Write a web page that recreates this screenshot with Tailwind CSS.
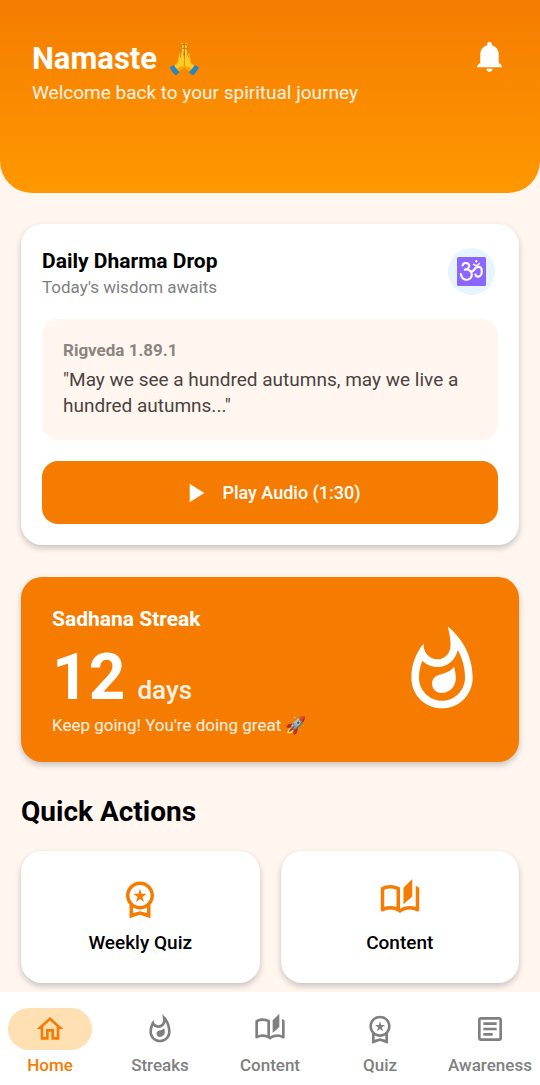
<!DOCTYPE html>
<html lang="en">
<head>
<meta charset="utf-8">
<meta name="viewport" content="width=device-width, initial-scale=1">
<title>Namaste</title>
<script src="https://cdn.jsdelivr.net/npm/@tailwindcss/browser@4"></script>
</head>
<body class="flex min-h-screen flex-col bg-[#fff6f0] font-['Roboto',sans-serif] text-black">
<svg class="hidden" aria-hidden="true">
  <symbol id="flame" viewBox="0 0 24 24"><path d="M11.57 13.16c-1.36.28-2.17 1.16-2.17 2.41 0 1.34 1.11 2.42 2.49 2.42 2.05 0 3.71-1.66 3.71-3.71 0-1.07-.15-2.12-.46-3.12-.79 1.07-2.2 1.72-3.57 2zM13.5.67s.74 2.65.74 4.8c0 2.06-1.35 3.73-3.41 3.73-2.07 0-3.63-1.67-3.63-3.73l.03-.36C5.21 7.51 4 10.62 4 14c0 4.42 3.58 8 8 8s8-3.58 8-8C20 8.61 17.41 3.8 13.5.67zM12 20c-3.31 0-6-2.69-6-6 0-1.53.3-3.04.86-4.43 1.01 1.01 2.41 1.63 3.97 1.63 2.66 0 4.75-1.83 5.28-4.43C17.34 8.97 18 11.44 18 14c0 3.31-2.69 6-6 6z"/></symbol>
  <symbol id="badge" viewBox="0 0 24 24"><path d="M9.68 13.69L12 11.93l2.31 1.76-.88-2.85L15.75 9h-2.84L12 6.19 11.09 9H8.25l2.31 1.84-.88 2.85zM20 10c0-4.42-3.58-8-8-8s-8 3.58-8 8c0 2.03.76 3.87 2 5.28V23l6-2 6 2v-7.72c1.24-1.41 2-3.25 2-5.28zm-8-6c3.31 0 6 2.69 6 6s-2.69 6-6 6-6-2.69-6-6 2.69-6 6-6zm0 15l-4 1.02v-3.1c1.18.68 2.54 1.08 4 1.08s2.82-.4 4-1.08v3.1L12 19z"/></symbol>
  <symbol id="book" viewBox="0 0 24 24"><path d="M22.47 5.2c-.47-.24-.96-.44-1.47-.61v12.03c-1.14-.41-2.31-.62-3.5-.62-1.9 0-3.78.54-5.5 1.58V5.48C10.38 4.55 8.51 4 6.5 4c-1.79 0-3.48.44-4.97 1.2-.33.16-.53.51-.53.88v12.08c0 .58.47.99 1 .99.16 0 .32-.04.48-.12C3.69 18.4 5.05 18 6.5 18c2.07 0 3.98.82 5.5 2 1.52-1.18 3.43-2 5.5-2 1.45 0 2.81.4 4.02 1.04.16.08.32.12.48.12.52 0 1-.41 1-.99V6.08c0-.37-.2-.72-.53-.88zM10 16.62C8.86 16.21 7.69 16 6.5 16c-1.19 0-2.36.21-3.5.62V6.71C4.11 6.24 5.28 6 6.5 6c1.2 0 2.39.25 3.5.72v9.9zM19 .5l-5 5V15l5-4.5V.5z"/></symbol>
</svg>

<header class="flex h-[193px] items-start justify-between rounded-b-[32px] bg-linear-to-b from-[#f57c00] to-[#ff9800] px-8 pt-[38px] text-white">
  <div>
    <h1 class="text-[31px] leading-[42px] font-bold">Namaste <span>🙏</span></h1>
    <p class="text-[19px] leading-[26px] text-white/90">Welcome back to your spiritual journey</p>
  </div>
  <button type="button" aria-label="Notifications">
    <svg class="size-[37px]" viewBox="0 0 24 24" fill="currentColor"><path d="M12 22c1.1 0 2-.9 2-2h-4c0 1.1.89 2 2 2zm6-6v-5c0-3.07-1.64-5.64-4.5-6.32V4c0-.83-.67-1.5-1.5-1.5s-1.5.67-1.5 1.5v.68C7.63 5.36 6 7.92 6 11v5l-2 2v1h16v-1l-2-2z"/></svg>
  </button>
</header>

<main class="flex grow flex-col px-[21px] pt-[31px] pb-[9px]">
  <section class="rounded-[21px] bg-white p-[21px] shadow-[0_3px_6px_rgba(0,0,0,0.22)]">
    <div class="flex items-center justify-between">
      <div>
        <h2 class="text-[21px] leading-8 font-bold">Daily Dharma Drop</h2>
        <p class="text-[17px] leading-5 text-[#808080]">Today's wisdom awaits</p>
      </div>
      <div class="mr-[3px] flex size-[47px] items-center justify-center rounded-full bg-[#e6f5ff]">
        <svg class="size-[29px]" viewBox="0 0 29 29" fill="none" stroke="#fff" stroke-width="2.1" stroke-linecap="round" stroke-linejoin="round" role="img" aria-label="Om">
          <rect width="29" height="29" rx="1.5" fill="#8c66ff" stroke="none"/>
          <path d="M5.6 8.4C6.1 6.4 8 5.7 9.9 6.1c2.1.5 2.8 2.6 1.7 4.4-.8 1.3-2.2 2-3.8 2.1 3.6-.5 6.8 1 7 4.4.2 3.300-2 5.800-5 5.800-3.200 0-5.400-2.300-5.900-5.700"/>
          <path d="M13.300 14.300c1.700.6 3-.3 3.900-1.700 1-1.600 2.300-2.700 4-2.700 2.300 0 3.600 1.900 3.600 4.400 0 2.900-1.500 5.300-3.800 5.300-1.400 0-2.300-.8-2.600-2.100"/>
          <path d="M16.600 7.300c1.500 1.600 4.200 1.500 5.700-.7" stroke-width="1.500"/>
          <path d="M19.300 2.800l1.500 1.500-1.500 1.500-1.500-1.500z" fill="#fff" stroke="none"/>
        </svg>
      </div>
    </div>
    <blockquote class="mt-[22px] rounded-2xl bg-[#fff6f0] p-[21px]">
      <p class="text-[17px] leading-[21px] font-bold text-[#8b8480]">Rigveda 1.89.1</p>
      <p class="mt-[6px] text-[19px] leading-[26px] text-[#4a4340]">"May we see a hundred autumns, may we live a hundred autumns..."</p>
    </blockquote>
    <button type="button" class="mt-[21px] flex h-[63px] w-full items-center justify-center gap-[11px] rounded-2xl bg-[#f57c00] text-[18px] font-medium text-white">
      <svg class="size-8" viewBox="0 0 24 24" fill="currentColor"><path d="M8 5v14l11-7z"/></svg>
      Play Audio (1:30)
    </button>
  </section>

  <section class="mt-8 flex items-center justify-between rounded-[21px] bg-[#f57c00] px-[31px] py-[26px] text-white shadow-[0_3px_6px_rgba(0,0,0,0.22)]">
    <div>
      <h2 class="text-[21px] leading-8 font-bold">Sadhana Streak</h2>
      <p class="mt-[5px] flex items-baseline gap-3"><span class="text-[64px] leading-[75px] font-bold">12</span><span class="text-[26px] leading-8 font-medium text-white/90">days</span></p>
      <p class="text-[17px] leading-[21px] text-white/90">Keep going! You're doing great <span>🚀</span></p>
    </div>
    <svg class="size-[92px]" fill="currentColor" aria-hidden="true"><use href="#flame"/></svg>
  </section>

  <h2 class="mt-[31px] text-[28px] leading-[37px] font-bold">Quick Actions</h2>
  <div class="mt-[21px] grid grid-cols-2 gap-[21px]">
    <button type="button" class="flex h-[132px] flex-col items-center justify-center gap-[10px] rounded-[21px] bg-white shadow-[0_3px_6px_rgba(0,0,0,0.22)]">
      <svg class="size-[42px] text-[#f57c00]" fill="currentColor" aria-hidden="true"><use href="#badge"/></svg>
      <span class="text-[19px] leading-[26px] font-medium">Weekly Quiz</span>
    </button>
    <button type="button" class="flex h-[132px] flex-col items-center justify-center gap-[10px] rounded-[21px] bg-white shadow-[0_3px_6px_rgba(0,0,0,0.22)]">
      <svg class="size-[42px] text-[#f57c00]" fill="currentColor" aria-hidden="true"><use href="#book"/></svg>
      <span class="text-[19px] leading-[26px] font-medium">Content</span>
    </button>
  </div>
</main>

<nav class="sticky bottom-0 grid h-[93px] grid-cols-5 gap-[10px] bg-white pt-4 text-[17px] leading-[21px] font-medium text-[#808080]">
  <a href="#home" aria-current="page" class="flex flex-col items-center gap-[5px] text-[#f57c00]">
    <span class="flex h-[42px] w-[84px] items-center justify-center rounded-full bg-[#ffe0b2]"><svg class="size-8" viewBox="0 0 24 24" fill="currentColor"><path d="M12 5.69l5 4.5V18h-2v-6H9v6H7v-7.81l5-4.5M12 3L2 12h3v8h6v-6h2v6h6v-8h3L12 3z"/></svg></span>
    Home
  </a>
  <a href="#streaks" class="flex flex-col items-center gap-[5px]">
    <span class="flex h-[42px] items-center"><svg class="size-8" fill="currentColor"><use href="#flame"/></svg></span>
    Streaks
  </a>
  <a href="#content" class="flex flex-col items-center gap-[5px]">
    <span class="flex h-[42px] items-center"><svg class="size-8" fill="currentColor"><use href="#book"/></svg></span>
    Content
  </a>
  <a href="#quiz" class="flex flex-col items-center gap-[5px]">
    <span class="flex h-[42px] items-center"><svg class="size-8" fill="currentColor"><use href="#badge"/></svg></span>
    Quiz
  </a>
  <a href="#awareness" class="flex flex-col items-center gap-[5px]">
    <span class="flex h-[42px] items-center"><svg class="size-8" viewBox="0 0 24 24" fill="currentColor"><path d="M19 5v14H5V5h14m0-2H5c-1.1 0-2 .9-2 2v14c0 1.1.9 2 2 2h14c1.1 0 2-.9 2-2V5c0-1.1-.9-2-2-2zM14 17H7v-2h7v2zm3-4H7v-2h10v2zm0-4H7V7h10v2z"/></svg></span>
    Awareness
  </a>
</nav>
</body>
</html>
